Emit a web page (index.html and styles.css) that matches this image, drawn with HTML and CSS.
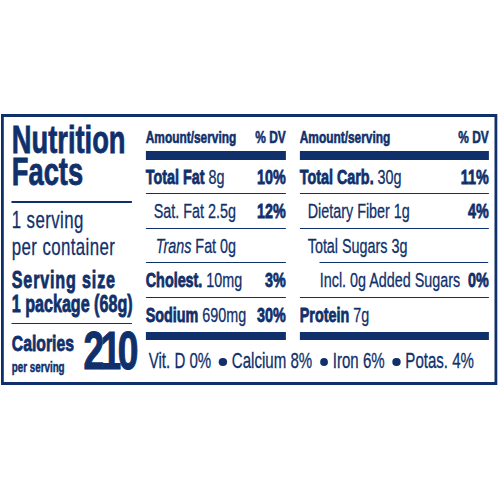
FILE: index.html
```html
<!DOCTYPE html>
<html lang="en">
<head>
<meta charset="utf-8">
<title>Nutrition Facts</title>
<link rel="stylesheet" href="styles.css">
</head>
<body>
<div class="frame">
<div class="label">
  <section class="head">
    <h1 class="title"><span class="title-line">Nutrition</span><span class="title-line">Facts</span></h1>
    <p class="servings">1 serving<br>per container</p>
    <p class="size"><span class="size-a">Serving size</span><br>1 package (68g)</p>
    <div class="calories">
      <div class="cal-label">
        <span class="cal-word">Calories</span>
        <span class="cal-sub">per serving</span>
      </div>
      <span class="cal-num">210</span>
    </div>
  </section>

  <section class="col">
    <div class="col-head"><span>Amount/serving</span><span>% DV</span></div>
    <div class="row"><span><b>Total Fat</b> 8g</span><b>10%</b></div>
    <div class="row sub"><span>Sat. Fat 2.5g</span><b>12%</b></div>
    <div class="row trans"><span><i>Trans</i> Fat 0g</span></div>
    <div class="row"><span><b>Cholest.</b> 10mg</span><b>3%</b></div>
    <div class="row"><span><b>Sodium</b> 690mg</span><b>30%</b></div>
  </section>

  <section class="col">
    <div class="col-head"><span>Amount/serving</span><span>% DV</span></div>
    <div class="row"><span><b>Total Carb.</b> 30g</span><b>11%</b></div>
    <div class="row sub"><span>Dietary Fiber 1g</span><b>4%</b></div>
    <div class="row sub sugars"><span>Total Sugars 3g</span></div>
    <div class="row subsub"><span>Incl. 0g Added Sugars</span><b>0%</b></div>
    <div class="row"><span><b>Protein</b> 7g</span></div>
  </section>

  <p class="vits">Vit. D 0%<span class="dot"></span>Calcium 8%<span class="dot"></span>Iron 6%<span class="dot"></span>Potas. 4%</p>
</div>
</div>
</body>
</html>
```

FILE: styles.css
```css
* {
  box-sizing: border-box;
}

html, body {
  margin: 0;
  padding: 0;
  background: #ffffff;
  overflow: hidden;
}

body {
  font-family: "Liberation Sans", Arial, sans-serif;
  color: #10306b;
  -webkit-text-stroke: 0.3px #10306b;
}

.frame {
  width: 500px;
  height: 500px;
  padding: 114px 0 0 1px;
  overflow: hidden;
}

/* the whole label is drawn 30% narrower to imitate a condensed face */
.label {
  width: 708.6px;
  border: 3px solid #10306b;
  border-left-width: 4.3px;
  border-right-width: 4.3px;
  padding: 0 7.2px 0 11.4px;
  display: grid;
  grid-template-columns: 171.4px 200px 270px;
  grid-template-rows: auto auto;
  column-gap: 20px;
  transform: scaleX(0.7);
  transform-origin: 0 0;
}

b,
.title,
.size,
.cal-label,
.cal-num,
.col-head {
  font-weight: 700;
  -webkit-text-stroke: 0.8px #10306b;
}

/* left column */
.head {
  grid-row: 1 / 3;
  grid-column: 1;
}

.title {
  margin: 6.5px 0 0;
  padding-bottom: 13.5px;
  border-bottom: 2px solid #10306b;
  font-size: 39px;
  line-height: 32px;
}

.title-line {
  display: block;
  height: 32px;
}

.servings {
  margin: 3px 0 0;
  font-size: 24px;
  line-height: 27px;
  letter-spacing: 0.6px;
}

.size {
  margin: 8px 0 0;
  padding-bottom: 7px;
  border-bottom: 1.5px solid #10306b;
  font-size: 23px;
  line-height: 24px;
  white-space: nowrap;
}

.size-a {
  letter-spacing: 1.2px;
}

.calories {
  margin-top: 6.5px;
  display: flex;
  justify-content: space-between;
  align-items: flex-start;
}

.cal-label {
  display: flex;
  flex-direction: column;
  padding-top: 2px;
}

.cal-word {
  font-size: 22.5px;
  line-height: 22px;
}

.cal-sub {
  margin-top: 4px;
  font-size: 14px;
  line-height: 16px;
  -webkit-text-stroke: 0.5px #10306b;
}

.cal-num {
  margin-right: -4.5px;
  font-size: 53px;
  line-height: 40px;
  letter-spacing: -5px;
  -webkit-text-stroke: 1.2px #10306b;
}

/* nutrient columns */
.col {
  padding-top: 12px;
  border-bottom: 8px solid #10306b;
}

.col-head {
  display: flex;
  justify-content: space-between;
  padding-bottom: 4px;
  border-bottom: 9px solid #10306b;
  font-size: 17px;
  line-height: 18px;
  white-space: nowrap;
  -webkit-text-stroke: 0.6px #10306b;
}

.row {
  display: flex;
  justify-content: space-between;
  height: 34.4px;
  border-bottom: 1px solid #10306b;
  font-size: 20.5px;
  line-height: 33.4px;
  white-space: nowrap;
}

.row:last-child {
  border-bottom: 0;
}

.row.sub {
  padding-left: 11.4px;
}

.row.trans {
  padding-left: 14.3px;
}

.row.sugars {
  border-bottom: 0;
  background: linear-gradient(#10306b, #10306b) no-repeat right bottom / calc(100% - 28.6px) 1px;
}

.row.subsub {
  padding-left: 28.6px;
}

/* vitamins */
.vits {
  grid-column: 2 / 4;
  grid-row: 2;
  margin: 0;
  padding-left: 4.3px;
  font-size: 21.5px;
  line-height: 42px;
  white-space: nowrap;
}

.dot {
  display: inline-block;
  width: 11.5px;
  height: 8px;
  margin: 0 7px 0 11px;
  border-radius: 50%;
  background: #10306b;
  vertical-align: middle;
}
```
